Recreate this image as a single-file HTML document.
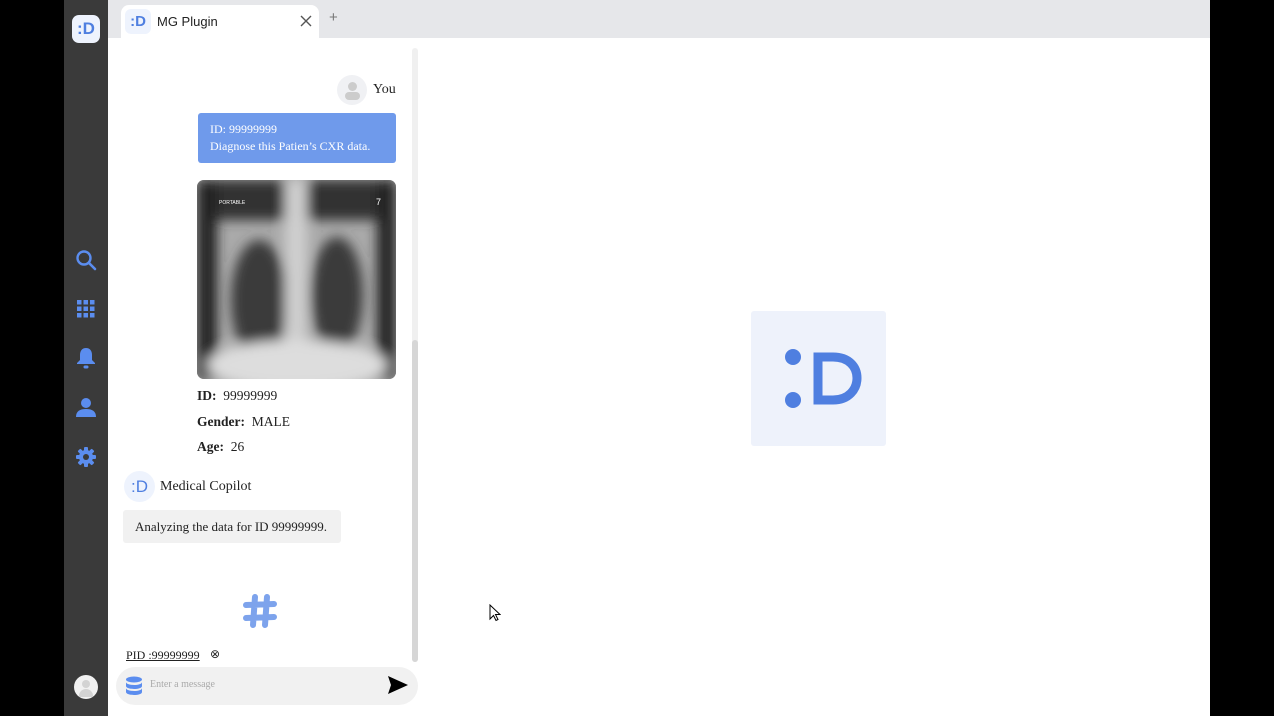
<!DOCTYPE html><html><head><meta charset="utf-8"><style>
*{margin:0;padding:0;box-sizing:border-box}
body{width:1274px;height:716px;background:#000;position:relative;overflow:hidden;font-family:"Liberation Serif",serif;color:#222}
.abs{position:absolute}
.logo{color:#4f7fe0;font-family:"Liberation Sans",sans-serif;font-weight:bold;display:flex;align-items:center;justify-content:center}
</style></head><body>
<div class="abs" style="left:64px;top:0;width:44px;height:716px;background:#3a3a3a"></div>
<div class="abs logo" style="left:72px;top:15px;width:28px;height:28px;background:#eef3fd;border-radius:7px;font-size:17px">:D</div>
<svg class="abs" style="left:75px;top:249px" width="22" height="22" viewBox="0 0 22 22"><circle cx="9" cy="9" r="6.5" fill="none" stroke="#5b8def" stroke-width="2.4"/><path d="M14 14l6 6" stroke="#5b8def" stroke-width="2.6" stroke-linecap="round"/></svg>
<svg class="abs" style="left:77px;top:300px" width="18" height="18"><g fill="#5b8def"><rect x="0" y="0" width="4.5" height="4.5"/><rect x="6.5" y="0" width="4.5" height="4.5"/><rect x="13" y="0" width="4.5" height="4.5"/><rect x="0" y="6.5" width="4.5" height="4.5"/><rect x="6.5" y="6.5" width="4.5" height="4.5"/><rect x="13" y="6.5" width="4.5" height="4.5"/><rect x="0" y="13" width="4.5" height="4.5"/><rect x="6.5" y="13" width="4.5" height="4.5"/><rect x="13" y="13" width="4.5" height="4.5"/></g></svg>
<svg class="abs" style="left:76px;top:347px" width="20" height="22" viewBox="0 0 20 22"><path d="M10 1c-4 0-6 3-6 7v5l-3 3v1h18v-1l-3-3V8c0-4-2-7-6-7z" fill="#5b8def"/><rect x="7.5" y="18.5" width="5" height="3" rx="1.5" fill="#5b8def"/></svg>
<svg class="abs" style="left:76px;top:397px" width="20" height="20" viewBox="0 0 20 20"><circle cx="10" cy="6" r="5" fill="#5b8def"/><path d="M0 20c0-6 4-8 10-8s10 2 10 8z" fill="#5b8def"/></svg>
<svg class="abs" style="left:76px;top:447px" width="20" height="20" viewBox="0 0 20 20"><g fill="#5b8def"><circle cx="10" cy="10" r="7"/><rect x="8" y="0" width="4" height="20" rx="1"/><rect x="0" y="8" width="20" height="4" rx="1"/><rect x="8" y="0" width="4" height="20" rx="1" transform="rotate(45 10 10)"/><rect x="8" y="0" width="4" height="20" rx="1" transform="rotate(-45 10 10)"/></g><circle cx="10" cy="10" r="3" fill="#3a3a3a"/></svg>
<div class="abs" style="left:74px;top:675px;width:24px;height:24px;border-radius:50%;background:#f1f1f1;overflow:hidden"><div class="abs" style="left:8px;top:5px;width:8px;height:8px;border-radius:50%;background:#d3d3d3"></div><div class="abs" style="left:5px;top:14px;width:14px;height:8px;border-radius:7px 7px 0 0;background:#d3d3d3"></div></div>
<div class="abs" style="left:108px;top:0;width:1102px;height:716px;background:#fff"></div>
<div class="abs" style="left:108px;top:0;width:1102px;height:38px;background:#e6e7ea"></div>
<div class="abs" style="left:121px;top:5px;width:198px;height:33px;background:#fff;border-radius:8px 8px 0 0"></div>
<div class="abs logo" style="left:125px;top:9px;width:26px;height:25px;background:#eef3fd;border-radius:6px;font-size:15px">:D</div>
<div class="abs" style="left:157px;top:14px;font-size:13px;font-family:'Liberation Sans',sans-serif;color:#222">MG Plugin</div>
<svg class="abs" style="left:300px;top:15px" width="12" height="12"><path d="M1 1l10 10M11 1L1 11" stroke="#555" stroke-width="1.4"/></svg>
<div class="abs" style="left:329px;top:9px;font-size:15px;color:#777;font-family:'Liberation Sans',sans-serif">+</div>
<div class="abs" style="left:412px;top:48px;width:6px;height:614px;background:#f0f0f0;border-radius:3px"></div>
<div class="abs" style="left:412px;top:340px;width:6px;height:322px;background:#d6d6d6;border-radius:3px"></div>
<div class="abs" style="left:337px;top:75px;width:30px;height:30px;border-radius:50%;background:#f0f1f4;overflow:hidden"><div class="abs" style="left:11px;top:7px;width:9px;height:9px;border-radius:50%;background:#ccc"></div><div class="abs" style="left:8px;top:17px;width:15px;height:8px;border-radius:7px;background:#ccc"></div></div>
<div class="abs" style="left:373px;top:82px;font-size:14px">You</div>
<div class="abs" style="left:198px;top:113px;width:198px;height:50px;background:#6f9aeb;border-radius:3px;color:#fff;font-size:12px;line-height:17px;padding:8px 12px">ID: 99999999<br>Diagnose this Patien’s CXR data.</div>
<div class="abs" style="left:197px;top:180px;width:199px;height:199px;border-radius:7px;overflow:hidden;background:#9a9a9a">
<svg width="199" height="199" viewBox="0 0 199 199"><defs><filter id="b"><feGaussianBlur stdDeviation="6"/></filter></defs>
<rect width="199" height="199" fill="#aaa"/>
<g filter="url(#b)"><rect x="0" y="0" width="199" height="40" fill="#333"/><rect x="0" y="0" width="20" height="199" fill="#222"/><rect x="180" y="0" width="19" height="199" fill="#222"/>
<ellipse cx="62" cy="120" rx="28" ry="60" fill="#3a3a3a"/><ellipse cx="140" cy="115" rx="26" ry="58" fill="#3a3a3a"/>
<rect x="88" y="0" width="22" height="199" fill="#cfcfcf"/><ellipse cx="100" cy="185" rx="90" ry="25" fill="#ddd"/></g></svg>
<div class="abs" style="left:22px;top:20px;color:#fff;font-size:5px;font-family:'Liberation Sans',sans-serif">PORTABLE</div>
<div class="abs" style="left:179px;top:17px;color:#fff;font-size:9px;font-family:'Liberation Sans',sans-serif">7</div></div>
<div class="abs" style="left:197px;top:383px;font-size:13.5px;line-height:25.5px"><b>ID:</b>&nbsp; 99999999<br><b>Gender:</b>&nbsp; MALE<br><b>Age:</b>&nbsp; 26</div>
<div class="abs logo" style="left:124px;top:471px;width:31px;height:31px;border-radius:50%;background:#eef3fd;font-size:17px;font-weight:normal">:D</div>
<div class="abs" style="left:160px;top:479px;font-size:14px">Medical Copilot</div>
<div class="abs" style="left:123px;top:510px;width:218px;height:33px;background:#f1f1f1;border-radius:3px;font-size:13px;padding:9px 12px">Analyzing the data for ID 99999999.</div>
<svg class="abs" style="left:242px;top:593px" width="36" height="36" viewBox="0 0 36 36"><g stroke="#6f9aeb" stroke-width="6" stroke-linecap="round" opacity=".9"><path d="M13 4l-2 28M25 4l-2 28M4 12l28 -1M4 25l28 -1"/></g></svg>
<div class="abs" style="left:126px;top:648px;font-size:12px;text-decoration:underline">PID :99999999</div>
<div class="abs" style="left:210px;top:647px;font-size:12px;font-family:'DejaVu Sans',sans-serif">⊗</div>
<div class="abs" style="left:116px;top:667px;width:302px;height:38px;background:#f1f1f1;border-radius:19px"></div>
<svg class="abs" style="left:125px;top:676px" width="18" height="20" viewBox="0 0 18 20"><g fill="#5b8def"><ellipse cx="9" cy="3.5" rx="8" ry="3"/><path d="M1 6c0 4 16 4 16 0v4c0 4-16 4-16 0z"/><path d="M1 12c0 4 16 4 16 0v4c0 4-16 4-16 0z"/></g></svg>
<div class="abs" style="left:150px;top:679px;font-size:10px;color:#aaa">Enter a message</div>
<svg class="abs" style="left:387px;top:675px" width="22" height="20" viewBox="0 0 22 20"><path d="M1 1l20 9-20 9 3-9z" fill="#000"/></svg>
<div class="abs" style="left:751px;top:311px;width:135px;height:135px;background:#eef2fb;border-radius:3px"></div>
<svg class="abs" style="left:751px;top:311px" width="135" height="135" viewBox="0 0 135 135"><g fill="#4f7fe0"><circle cx="42" cy="46" r="8"/><circle cx="42" cy="89" r="8"/></g><path d="M67 46h15c16 0 24 10 24 21s-8 22-24 22H67z" fill="none" stroke="#4f7fe0" stroke-width="9"/></svg>
<svg class="abs" style="left:489px;top:604px" width="12" height="18"><path d="M1 1v14l3.5-3.5 2.5 5 2-1-2.5-5H11z" fill="#fff" stroke="#000"/></svg>
</body></html>
